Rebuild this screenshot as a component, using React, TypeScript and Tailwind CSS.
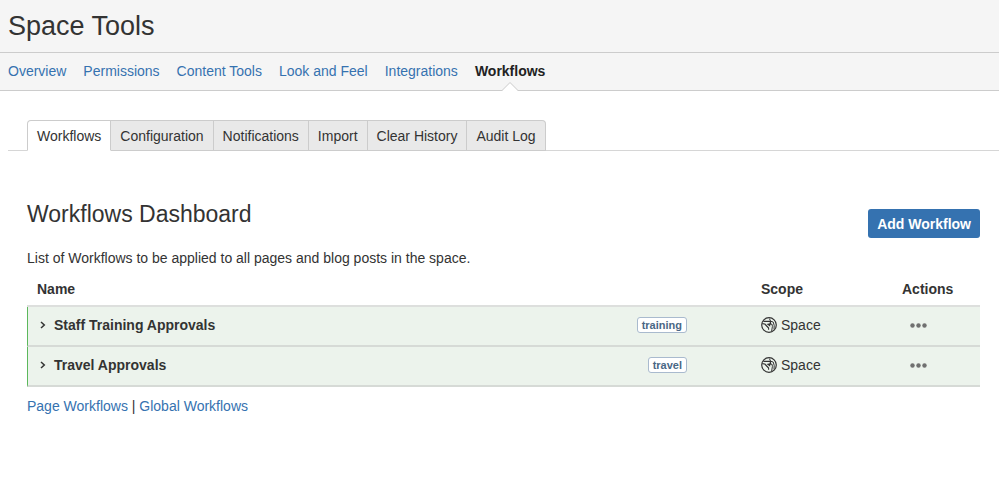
import { useState } from "react";
import clsx from "clsx";

const navItems = [
  "Overview",
  "Permissions",
  "Content Tools",
  "Look and Feel",
  "Integrations",
  "Workflows",
];

const tabs = [
  "Workflows",
  "Configuration",
  "Notifications",
  "Import",
  "Clear History",
  "Audit Log",
];

const workflows = [
  { name: "Staff Training Approvals", label: "training", scope: "Space" },
  { name: "Travel Approvals", label: "travel", scope: "Space" },
];

function GlobeIcon() {
  return (
    <svg
      viewBox="0 0 16 16"
      className="size-4 shrink-0"
      fill="none"
      stroke="#333"
      strokeLinejoin="round"
      aria-hidden="true"
    >
      <circle cx="8" cy="8" r="7.3" strokeWidth="1.2" />
      <path d="M2.4 4.4H9.4L9.4 7.4" strokeWidth="1.3" />
      <path d="M1.2 6.6 3.8 7 7.6 11 7.6 12.8" strokeWidth="1.1" />
      <path d="M8.4 1.6 9.6 4.2 12.2 5 13.2 8.4 13 12.4" />
      <path d="M9.4 7.2H11L11.4 9.4 10.6 14.4" />
      <path d="M5.6 7 9.2 6.2V9.8Z" fill="#333" stroke="none" />
    </svg>
  );
}

function ChevronIcon() {
  return (
    <svg
      viewBox="0 0 6 8"
      className="h-2 w-[6px]"
      fill="none"
      stroke="#333"
      strokeWidth="1.5"
      aria-hidden="true"
    >
      <path d="M1 1 4.3 4 1 7" />
    </svg>
  );
}

function DotsIcon() {
  return (
    <svg
      viewBox="0 0 17 5"
      className="h-[5px] w-[17px]"
      fill="#707070"
      aria-hidden="true"
    >
      <circle cx="2.5" cy="2.5" r="2.2" />
      <circle cx="8.5" cy="2.5" r="2.2" />
      <circle cx="14.5" cy="2.5" r="2.2" />
    </svg>
  );
}

export default function App() {
  const [activeTab, setActiveTab] = useState("Workflows");

  return (
    <div className="min-h-screen bg-white font-['Liberation_Sans',Arial,sans-serif] text-sm text-[#333]">
      <header className="bg-[#f5f5f5]">
        <h1 className="border-b border-[#ccc] px-2 pt-2 pb-2 text-[27px] leading-9">
          Space Tools
        </h1>
        <nav className="flex h-[38px] gap-[17px] border-b border-[#ccc] px-2 leading-9">
          {navItems.map((item) => {
            const active = item === "Workflows";
            return (
              <a
                key={item}
                href="#"
                className={clsx(
                  "relative whitespace-nowrap",
                  active ? "font-bold text-[#222]" : "text-[#3572b0]",
                )}
              >
                {item}
                {active && (
                  <svg
                    viewBox="0 0 16 9"
                    className="absolute -bottom-px left-1/2 h-[9px] w-4 -translate-x-1/2"
                    aria-hidden="true"
                  >
                    <path d="M0 9 8 1 16 9Z" fill="#fff" />
                    <path d="M0 8.5 8 .5 16 8.5" fill="none" stroke="#ccc" />
                  </svg>
                )}
              </a>
            );
          })}
        </nav>
      </header>

      <main>
        <div
          role="tablist"
          className="mt-[29px] ml-2 flex border-b border-[#d6d6d6] pl-[19px]"
        >
          {tabs.map((tab) => (
            <button
              key={tab}
              type="button"
              role="tab"
              aria-selected={tab === activeTab}
              onClick={() => setActiveTab(tab)}
              className={clsx(
                "-mb-px h-[31px] border border-l-0 border-[#ccc] px-[9px] whitespace-nowrap first:rounded-tl first:border-l last:rounded-tr",
                tab === activeTab ? "border-b-white bg-white" : "bg-[#e9e9e9]",
              )}
            >
              {tab}
            </button>
          ))}
        </div>

        <section className="pt-[49px] pr-[19px] pl-[27px]">
          <div className="flex justify-between">
            <h2 className="text-[23px] leading-7">Workflows Dashboard</h2>
            <button
              type="button"
              className="mt-[9px] h-[29px] rounded-[3px] bg-[#3572b0] px-[9px] font-bold text-white"
            >
              Add Workflow
            </button>
          </div>
          <p className="mt-[10px] leading-5">
            List of Workflows to be applied to all pages and blog posts in the
            space.
          </p>

          <table className="w-full table-fixed border-separate border-spacing-0 text-left">
            <colgroup>
              <col />
              <col className="w-[96px]" />
              <col className="w-[141px]" />
              <col className="w-[78px]" />
            </colgroup>
            <thead>
              <tr className="h-[39px] *:border-b-2 *:border-b-[#dddfdd]">
                <th className="px-[10px] pt-1">Name</th>
                <td></td>
                <th className="pt-1">Scope</th>
                <th className="pt-1">Actions</th>
              </tr>
            </thead>
            <tbody>
              {workflows.map((workflow) => (
                <tr
                  key={workflow.name}
                  className="h-10 bg-[#ecf3ec] *:border-b-2 *:border-b-[#d6dad6] *:pb-[2px]"
                >
                  <td className="border-l border-l-[#5cb85c] pl-3">
                    <button
                      type="button"
                      className="flex items-center gap-2 font-bold"
                    >
                      <ChevronIcon />
                      {workflow.name}
                    </button>
                  </td>
                  <td className="pr-[74px]">
                    <div className="flex justify-end">
                      <a
                        href="#"
                        className="rounded-[3px] border border-[#a9bace] bg-white px-1 text-[11px] leading-[14px] font-bold text-[#4a6785]"
                      >
                        {workflow.label}
                      </a>
                    </div>
                  </td>
                  <td>
                    <span className="flex items-center gap-1">
                      <GlobeIcon />
                      {workflow.scope}
                    </span>
                  </td>
                  <td>
                    <button
                      type="button"
                      aria-label={`Actions for ${workflow.name}`}
                      className="flex items-center px-2 py-2"
                    >
                      <DotsIcon />
                    </button>
                  </td>
                </tr>
              ))}
            </tbody>
          </table>

          <p className="mt-[9px] leading-5">
            <a href="#" className="text-[#3572b0]">
              Page Workflows
            </a>
            {" | "}
            <a href="#" className="text-[#3572b0]">
              Global Workflows
            </a>
          </p>
        </section>
      </main>
    </div>
  );
}
